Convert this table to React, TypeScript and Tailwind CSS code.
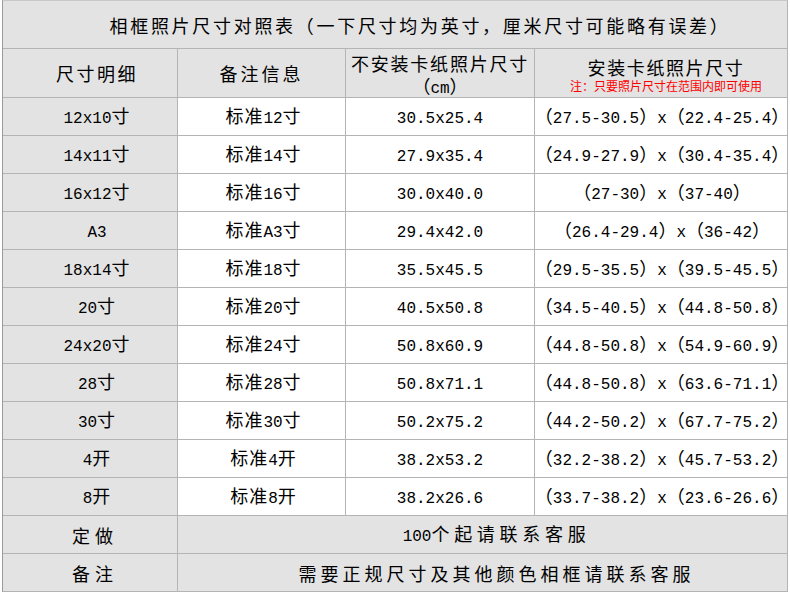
import React from 'react';

// ASCII runs are set smaller in a monospace face so they take about half the width of a CJK glyph
const Txt: React.FC<{ s: string }> = ({ s }) => (
  <span>
    {s.split(/([\x20-\x7e]+)/).filter(Boolean).map((part, i) =>
      /^[\x20-\x7e]+$/.test(part) ? (
        <span key={i} className="font-['Liberation_Mono'] text-[16px] tracking-normal">{part}</span>
      ) : (
        <span key={i}>{part}</span>
      )
    )}
  </span>
);

const ROWS: string[][] = [
  ['12x10寸', '标准12寸', '30.5x25.4', '（27.5-30.5）x（22.4-25.4）'],
  ['14x11寸', '标准14寸', '27.9x35.4', '（24.9-27.9）x（30.4-35.4）'],
  ['16x12寸', '标准16寸', '30.0x40.0', '（27-30）x（37-40）'],
  ['A3', '标准A3寸', '29.4x42.0', '（26.4-29.4）x（36-42）'],
  ['18x14寸', '标准18寸', '35.5x45.5', '（29.5-35.5）x（39.5-45.5）'],
  ['20寸', '标准20寸', '40.5x50.8', '（34.5-40.5）x（44.8-50.8）'],
  ['24x20寸', '标准24寸', '50.8x60.9', '（44.8-50.8）x（54.9-60.9）'],
  ['28寸', '标准28寸', '50.8x71.1', '（44.8-50.8）x（63.6-71.1）'],
  ['30寸', '标准30寸', '50.2x75.2', '（44.2-50.2）x（67.7-75.2）'],
  ['4开', '标准4开', '38.2x53.2', '（32.2-38.2）x（45.7-53.2）'],
  ['8开', '标准8开', '38.2x26.6', '（33.7-38.2）x（23.6-26.6）'],
];

const gray = 'bg-[#e3e3e3]';
const cell = 'flex items-center justify-center h-[37px] whitespace-nowrap';

export default function App() {
  return (
    <div className="w-[790px] h-[593px] bg-white overflow-hidden font-['Noto_Sans_CJK_SC',sans-serif] text-[18px] text-black leading-none">
      <div className="ml-[2px] w-[786px] grid grid-cols-[174px_167px_188px_252px] gap-px bg-[#b4b4b4] border border-[#b4b4b4] border-l-[#9a9a9a] border-t-[#c8c8c8]">
        {/* title */}
        <div className={`col-span-4 h-[47px] flex items-center justify-center pl-[50px] tracking-[2.7px] ${gray}`}>
          相框照片尺寸对照表（一下尺寸均为英寸，厘米尺寸可能略有误差）
        </div>

        {/* header */}
        <div className={`h-[48px] flex items-center justify-center pl-[14px] tracking-[2.5px] ${gray}`}>尺寸明细</div>
        <div className={`h-[48px] flex items-center justify-center tracking-[3px] ${gray}`}>备注信息</div>
        <div className={`h-[48px] flex flex-col items-center justify-center gap-[4px] pt-[6px] ${gray}`}>
          <span className="leading-[18px] tracking-[1.8px] whitespace-nowrap">不安装卡纸照片尺寸</span>
          <span className="leading-[18px]"><Txt s="（cm）" /></span>
        </div>
        <div className={`h-[48px] flex flex-col items-center justify-center gap-[4px] pt-[4px] pl-[10px] ${gray}`}>
          <span className="leading-[18px] tracking-[1.6px] whitespace-nowrap">安装卡纸照片尺寸</span>
          <span className="leading-[12px] text-[12px] text-[#ff0000] whitespace-nowrap">注：只要照片尺寸在范围内即可使用</span>
        </div>

        {/* data rows */}
        {ROWS.map((r, idx) => (
          <React.Fragment key={idx}>
            <div className={`${cell} pl-[14px] tracking-[1px] ${gray}`}><Txt s={r[0]} /></div>
            <div className={`${cell} pl-[4px] tracking-[1px] bg-white`}><Txt s={r[1]} /></div>
            <div className={`${cell} bg-white`}><Txt s={r[2]} /></div>
            <div className={`${cell} pl-[2px] bg-white`}><Txt s={r[3]} /></div>
          </React.Fragment>
        ))}

        {/* footer rows */}
        <div className={`${cell} pl-[10px] tracking-[5px] ${gray}`}>定做</div>
        <div className={`${cell} col-span-3 pl-[28px] tracking-[4.7px] ${gray}`}><Txt s="100个起请联系客服" /></div>
        <div className={`${cell} pl-[10px] tracking-[5px] ${gray}`}>备注</div>
        <div className={`${cell} col-span-3 pl-[28px] tracking-[4px] ${gray}`}>需要正规尺寸及其他颜色相框请联系客服</div>
      </div>
    </div>
  );
}
